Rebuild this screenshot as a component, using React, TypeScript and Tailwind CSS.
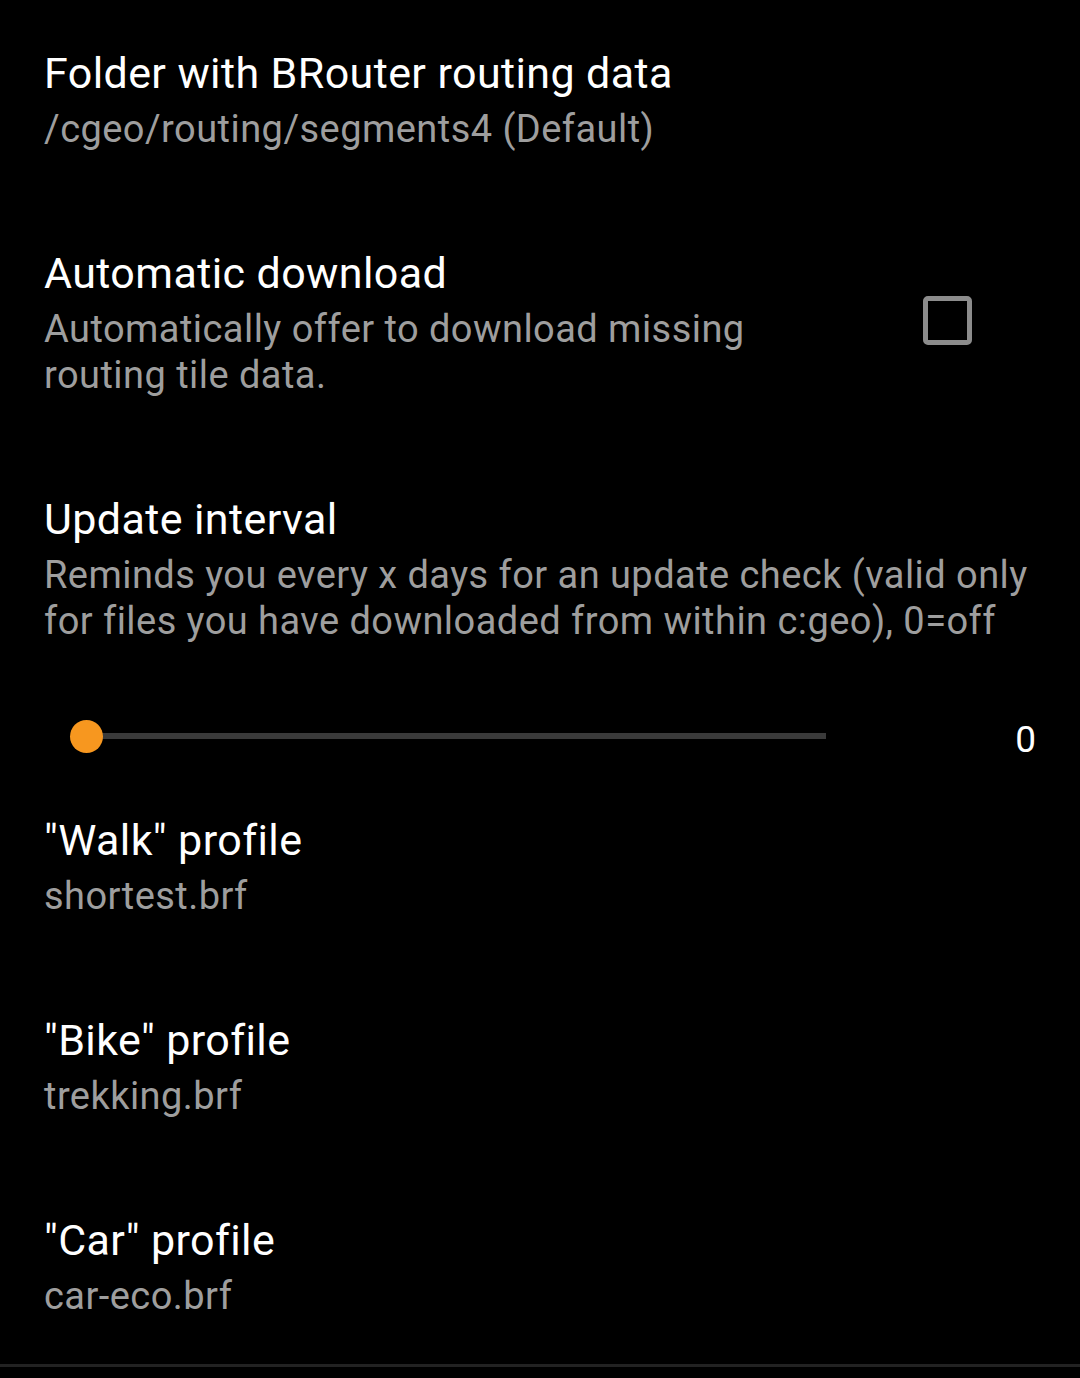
import React from "react";

const font = { fontFamily: "Roboto, 'Noto Sans', sans-serif" };

function Pref({
  title,
  summary,
  right,
  bottom,
  pb = "pb-[48px]",
}: {
  title: string;
  summary: string[];
  right?: React.ReactNode;
  bottom?: React.ReactNode;
  pb?: string;
}) {
  return (
    <div className={`pl-[44px] pr-[45px] pt-[48px] ${pb}`}>
      <div className="flex items-center">
        <div className="flex-1 min-w-0">
          <div className="text-[43px] leading-[50px] tracking-[0.4px] text-white whitespace-nowrap">{title}</div>
          <div className="mt-[8px] text-[38px] leading-[46px] tracking-[0.45px] text-[#9e9e9e] whitespace-nowrap">
            {summary.map((s, i) => (
              <div key={i}>{s}</div>
            ))}
          </div>
        </div>
        {right}
      </div>
      {bottom}
    </div>
  );
}

export default function App() {
  return (
    <div className="w-[1080px] h-[1378px] bg-black overflow-hidden" style={font}>
      <Pref title="Folder with BRouter routing data" summary={["/cgeo/routing/segments4 (Default)"]} />
      <Pref
        title="Automatic download"
        summary={["Automatically offer to download missing", "routing tile data."]}
        right={
          <div className="mr-[63px] mt-[-6px] w-[49px] h-[49px] rounded-[5px] border-[5px] border-[#8c8c8c]" />
        }
      />
      <Pref
        title="Update interval"
        summary={[
          "Reminds you every x days for an update check (valid only",
          "for files you have downloaded from within c:geo), 0=off",
        ]}
        pb="pb-0"
        bottom={
          <div className="mt-[61px] h-[62px] flex items-center">
            <div className="relative ml-[43px] w-[739px] h-[6px] bg-[#3a3a3a]">
              <div className="absolute left-[-17px] top-[-13.5px] w-[33px] h-[33px] rounded-full bg-[#f7971f]" />
            </div>
            <div className="flex-1" />
            <div className="text-[37px] leading-[46px] text-white mt-[8px] mr-[-1px]">0</div>
          </div>
        }
      />
      <Pref title={'"Walk" profile'} summary={["shortest.brf"]} />
      <Pref title={'"Bike" profile'} summary={["trekking.brf"]} />
      <Pref title={'"Car" profile'} summary={["car-eco.brf"]} pb="pb-[45px]" />
      <div className="h-[3px] bg-[#222222]" />
    </div>
  );
}
